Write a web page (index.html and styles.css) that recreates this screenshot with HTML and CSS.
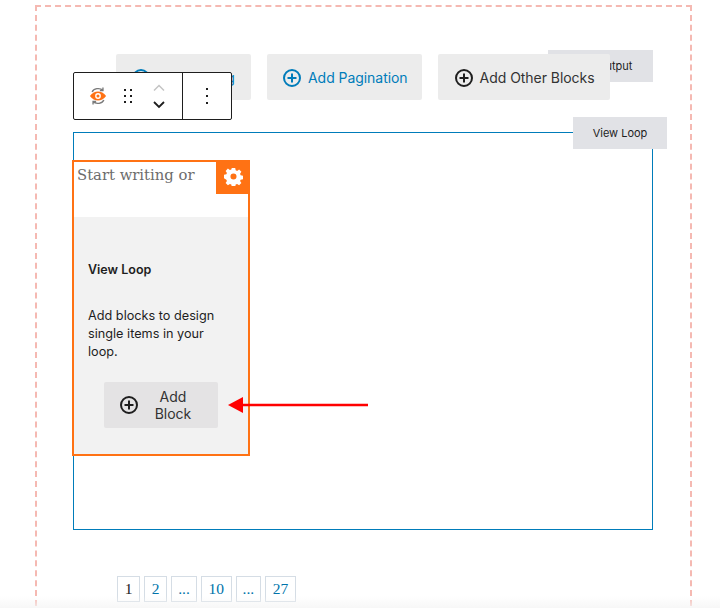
FILE: index.html
```html
<!DOCTYPE html>
<html lang="en">
<head>
    <meta charset="UTF-8">
    <title>View Loop block</title>
    <link rel="stylesheet" href="styles.css">
</head>
<body>
    <div class="view-block">
        <div class="view-label view-label-output">View Output</div>

        <div class="view-actions">
            <div class="action-btn action-blue">
                <svg class="plus-icon" viewBox="0 0 20 20"><circle cx="10" cy="10" r="8" /><path d="M10 5.500v9M5.500 10h9" /></svg>
                Add Sorting
            </div>
            <div class="action-btn action-blue">
                <svg class="plus-icon" viewBox="0 0 20 20"><circle cx="10" cy="10" r="8" /><path d="M10 5.500v9M5.500 10h9" /></svg>
                Add Pagination
            </div>
            <div class="action-btn action-dark">
                <svg class="plus-icon" viewBox="0 0 20 20"><circle cx="10" cy="10" r="8" /><path d="M10 5.500v9M5.500 10h9" /></svg>
                Add Other Blocks
            </div>
        </div>

        <div class="toolbar">
            <div class="toolbar-group toolbar-main">
                <svg class="tool-eye" viewBox="0 0 20 24">
                    <path class="eye-arrow" d="M3.500 7.500C5 3.500 12 2.500 15.500 5.500M15.500 2.500v3.400h-3.400" />
                    <path class="eye-arrow" d="M16.500 16.500C15 20.500 8 21.500 4.500 18.500M4.500 21.500v-3.400h3.400" />
                    <path class="eye-shape" d="M1 12C3.500 8.300 6.800 7 10 7s6.500 1.300 9 5c-2.500 3.700-5.800 5-9 5s-6.500-1.300-9-5z" />
                    <circle class="eye-white" cx="10" cy="12" r="3.200" />
                    <circle class="eye-shape" cx="10" cy="12" r="1.700" />
                </svg>
                <svg class="tool-drag" viewBox="0 0 10 14">
                    <path d="M1 0h2v2H1zM7 0h2v2H7zM1 6h2v2H1zM7 6h2v2H7zM1 12h2v2H1zM7 12h2v2H7z" />
                </svg>
                <svg class="tool-move" viewBox="0 0 14 26">
                    <path class="move-up" d="M2 7.500L7 2.500l5 5" />
                    <path class="move-down" d="M2 19L7 24l5-5" />
                </svg>
            </div>
            <div class="toolbar-group toolbar-more">
                <svg class="tool-more" viewBox="0 0 4 16">
                    <path d="M1 0h2v2H1zM1 7h2v2H1zM1 14h2v2H1z" />
                </svg>
            </div>
        </div>

        <div class="loop-box">
            <div class="view-label view-label-loop">View Loop</div>
            <div class="loop-item">
                <div class="item-head">
                    <span class="item-placeholder">Start writing or</span>
                    <div class="item-gear">
                        <svg viewBox="0 0 20 20"><path fill-rule="evenodd" d="M8.200 1h3.600l.5 2.500 1.500.6 2.100-1.400 2.400 2.400-1.400 2.100.6 1.500 2.500.5v3.600l-2.500.5-.6 1.500 1.400 2.100-2.400 2.400-2.100-1.400-1.500.6-.5 2.500H8.200l-.5-2.500-1.500-.6-2.100 1.400-2.400-2.400 1.400-2.100-.6-1.500L0 11.800V8.200l2.500-.5.600-1.500-1.400-2.100 2.400-2.400 2.100 1.400 1.500-.6zM10 6.800a3.200 3.200 0 1 0 0 6.400 3.200 3.200 0 0 0 0-6.400z" /></svg>
                    </div>
                </div>
                <div class="item-body">
                    <h4>View Loop</h4>
                    <p>Add blocks to design single items in your loop.</p>
                    <div class="add-block-btn">
                        <svg class="plus-icon" viewBox="0 0 20 20"><circle cx="10" cy="10" r="8" /><path d="M10 5.500v9M5.500 10h9" /></svg>
                        <span>Add Block</span>
                    </div>
                </div>
            </div>
        </div>

        <div class="pagination">
            <span class="page page-current">1</span>
            <span class="page">2</span>
            <span class="page page-dots">...</span>
            <span class="page">10</span>
            <span class="page page-dots">...</span>
            <span class="page">27</span>
        </div>
    </div>

    <svg class="arrow-note" viewBox="0 0 140 18"><path d="M140 9H14" /><polygon points="0,9 15,1 15,17" /></svg>
    <div class="page-fade"></div>
</body>
</html>
```

FILE: styles.css
```css
/* Base Styles */
* {
    box-sizing: border-box;
    margin: 0;
    padding: 0;
}

html, body {
    height: 608px;
    overflow: hidden;
}

body {
    position: relative;
    font-family: 'Inter', 'Liberation Sans', sans-serif;
    background: white;
    color: #1e1e1e;
}

/* Outer dashed block */
.view-block {
    position: relative;
    width: 657px;
    height: 601px;
    margin: 5px 0 0 35px;
    border: 2px dashed #f5b9b2;
    border-bottom: none;
}

.view-label {
    position: absolute;
    display: flex;
    align-items: center;
    justify-content: center;
    height: 32px;
    background: #e1e2e6;
    font-size: 11px;
}

.view-label-output {
    left: 511px;
    top: 43px;
    width: 105px;
}

.view-label-loop {
    right: -15px;
    top: -16px;
    width: 94px;
}

/* Add buttons */
.view-actions {
    position: relative;
    display: flex;
    gap: 16px;
    margin-top: 47px;
    padding-left: 79px;
}

.action-btn {
    display: flex;
    align-items: center;
    gap: 6px;
    height: 46px;
    padding: 1px 14px 0 15px;
    background: #ececec;
    border-radius: 2px;
    font-size: 14px;
    letter-spacing: -0.050px;
    white-space: nowrap;
}

.action-btn:first-child {
    width: 135px;
}

.action-blue {
    color: #007cba;
}

.action-dark {
    padding-left: 16px;
    padding-right: 15px;
    color: #333;
}

.plus-icon {
    flex: none;
    width: 20px;
    height: 20px;
    fill: none;
    stroke: currentColor;
    stroke-width: 2;
}

.action-dark .plus-icon {
    color: #1e1e1e;
}

/* Block toolbar */
.toolbar {
    position: absolute;
    left: 36px;
    top: 65px;
    display: flex;
    width: 159px;
    height: 48px;
    background: white;
    border: 1px solid #1e1e1e;
    border-radius: 2px;
}

.toolbar-group {
    display: flex;
    align-items: center;
}

.toolbar-main {
    width: 109px;
    padding-left: 15px;
    border-right: 1px solid #1e1e1e;
}

.toolbar-more {
    flex: 1;
    justify-content: center;
}

.tool-eye {
    width: 18px;
    height: 22px;
}

.eye-arrow {
    fill: none;
    stroke: #7a7a7a;
    stroke-width: 1.500;
}

.eye-shape {
    fill: #ff7214;
}

.eye-white {
    fill: white;
}

.tool-drag {
    width: 10px;
    height: 14px;
    margin-left: 16px;
    fill: #1e1e1e;
}

.tool-move {
    width: 14px;
    height: 26px;
    margin-left: 19px;
    fill: none;
    stroke-width: 1.500;
}

.move-up {
    stroke: #c4c4c4;
}

.move-down {
    stroke: #1e1e1e;
    stroke-width: 1.800;
}

.tool-more {
    width: 4px;
    height: 16px;
    fill: #1e1e1e;
}

/* Loop area */
.loop-box {
    position: relative;
    width: 580px;
    height: 398px;
    margin: 32px 0 0 36px;
    padding-top: 27px;
    border: 1px solid #007cba;
}

.loop-item {
    display: flex;
    flex-direction: column;
    width: 178px;
    height: 296px;
    margin-left: -2px;
    border: 2px solid #ff7214;
}

.item-head {
    display: flex;
    justify-content: space-between;
    align-items: flex-start;
    height: 55px;
}

.item-placeholder {
    padding: 4px 0 0 3px;
    font-family: 'DejaVu Serif', serif;
    font-size: 14.800px;
    color: #6c6c6c;
}

.item-gear {
    display: flex;
    align-items: center;
    justify-content: center;
    width: 34px;
    height: 32px;
    margin-right: -2px;
    padding-bottom: 3px;
    background: #ff7214;
}

.item-gear svg {
    width: 19px;
    height: 19px;
    fill: white;
}

.item-body {
    flex: 1;
    padding: 45px 14px 0;
    background: #f2f2f2;
}

.item-body h4 {
    font-size: 12.500px;
    font-weight: 600;
    line-height: 16px;
}

.item-body p {
    margin-top: 29px;
    font-size: 12.700px;
    line-height: 18px;
}

.add-block-btn {
    display: flex;
    align-items: center;
    width: 114px;
    height: 46px;
    margin: 21px 0 0 16px;
    padding: 0 15px;
    background: #e4e3e4;
    border-radius: 2px;
    font-size: 14px;
    line-height: 17px;
    text-align: center;
    color: #333;
}

.add-block-btn .plus-icon {
    color: #1e1e1e;
}

.add-block-btn span {
    flex: 1;
    padding: 0 6px 0 10px;
}

/* Pagination */
.pagination {
    display: flex;
    gap: 4px;
    margin-top: 46px;
    padding-left: 80px;
}

.page {
    display: flex;
    align-items: center;
    justify-content: center;
    height: 26px;
    padding: 0 6.700px;
    border: 1px solid #d5dde5;
    font-family: 'Liberation Serif', serif;
    font-size: 15.500px;
    color: #0073aa;
}

.page-current {
    color: #222;
}

.page-dots {
    width: 25.500px;
}

/* Overlays */
.arrow-note {
    position: absolute;
    left: 228px;
    top: 396px;
    width: 140px;
    height: 18px;
}

.arrow-note path {
    stroke: #ff0000;
    stroke-width: 2.500;
}

.arrow-note polygon {
    fill: #ff0000;
}

.page-fade {
    position: absolute;
    left: 0;
    right: 0;
    bottom: 0;
    height: 12px;
    background: linear-gradient(rgba(245, 245, 245, 0), rgba(245, 245, 245, 0.8));
}
```
